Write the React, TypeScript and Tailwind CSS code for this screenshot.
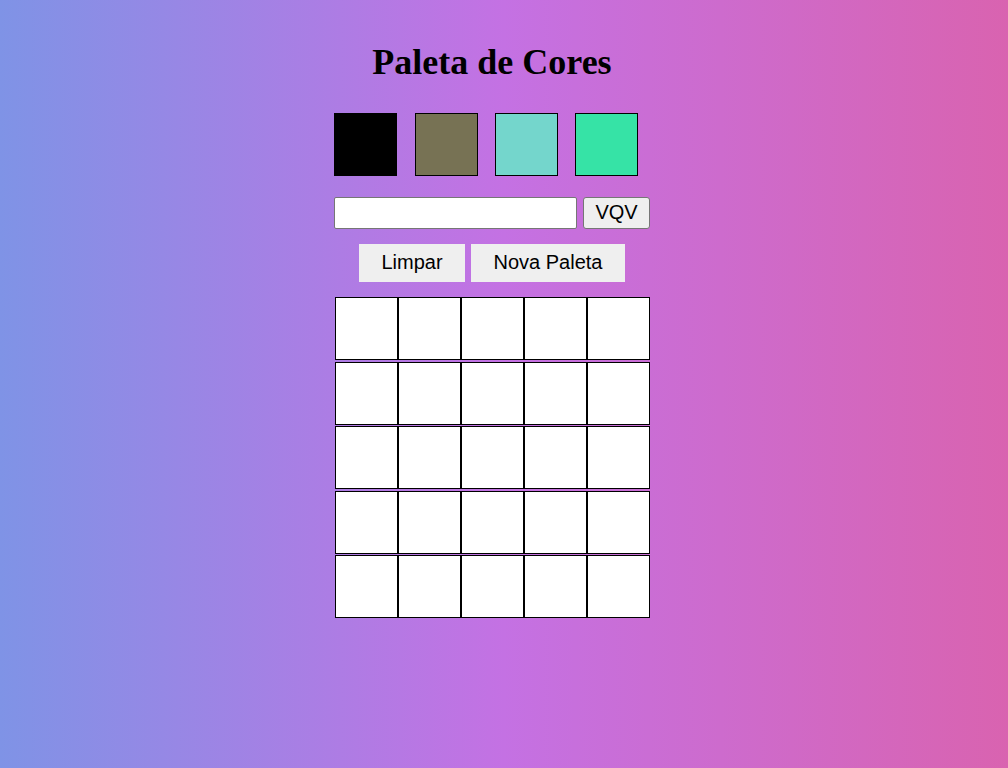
import React from 'react';

const paletteColors = ['#000000', '#777254', '#74d6cc', '#36e3a6'];

const App: React.FC = () => {
  const cells = Array.from({ length: 25 }, (_, i) => i);

  return (
    <div className="min-h-screen w-full bg-[linear-gradient(to_right,#7f93e6,#c471e3_50%,#d963b0)] font-['Liberation_Sans',Arial,sans-serif]">
      <div className="w-[984px] flex flex-col items-center pt-[42px]">
        <h1 className="font-['Liberation_Serif','Times_New_Roman',serif] font-bold text-[36px] leading-[41px] text-black">
          Paleta de Cores
        </h1>

        <div className="w-[316px] flex mt-[30px]">
          {paletteColors.map((c, i) => (
            <div
              key={c}
              className={`w-[63px] h-[63px] border border-black ${i === 0 ? '' : i === 1 ? 'ml-[18px]' : 'ml-[17px]'}`}
              style={{ backgroundColor: c }}
            />
          ))}
        </div>

        <div className="w-[316px] flex gap-[6px] mt-[21px]">
          <input
            type="text"
            className="w-[243px] h-[32px] bg-white border border-[#767676] rounded-[2px] px-1 outline-none"
          />
          <button className="w-[67px] h-[32px] bg-[#efefef] border border-[#767676] rounded-[3px] text-[20px] leading-none pb-[3px] text-black">
            VQV
          </button>
        </div>

        <div className="flex gap-[6px] mt-[15px]">
          <button className="w-[106px] h-[38px] bg-[#efefef] text-[20px] leading-none pb-[2px] text-black">Limpar</button>
          <button className="w-[154px] h-[38px] bg-[#efefef] text-[20px] leading-none pb-[2px] text-black">Nova Paleta</button>
        </div>

        <div className="grid grid-cols-5 gap-y-[1.5px] mt-[15px] w-[315px]">
          {cells.map((i) => (
            <div key={i} className="w-[63px] h-[63px] bg-white border border-black" />
          ))}
        </div>
      </div>
    </div>
  );
};

export default App;
